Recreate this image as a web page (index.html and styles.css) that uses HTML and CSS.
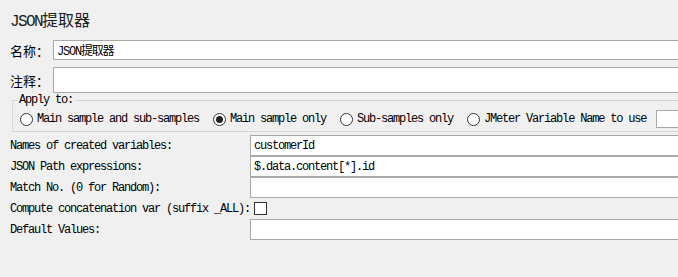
FILE: index.html
```html
<!DOCTYPE html>
<html lang="zh-CN">
<head>
    <meta charset="UTF-8">
    <meta name="viewport" content="width=device-width, initial-scale=1.0">
    <title>JSON提取器</title>
    <link rel="stylesheet" href="styles.css">
</head>
<body>
    <div class="panel">
        <h1 class="title"><span class="latin">JSON</span>提取器</h1>

        <div class="top-row name-row">
            <label class="top-label">名称：</label>
            <input class="field" type="text" value="JSON提取器">
        </div>
        <div class="top-row comment-row">
            <label class="top-label">注释：</label>
            <input class="field" type="text">
        </div>

        <fieldset class="apply-to">
            <legend>Apply to:</legend>
            <div class="radio-group">
                <div class="radio-item"><span class="radio"></span>Main sample and sub-samples</div>
                <div class="radio-item"><span class="radio checked"></span>Main sample only</div>
                <div class="radio-item"><span class="radio"></span>Sub-samples only</div>
                <div class="radio-item"><span class="radio"></span>JMeter Variable Name to use</div>
                <input class="field var-field" type="text">
            </div>
        </fieldset>

        <div class="settings">
            <label>Names of created variables:</label>
            <input class="field" type="text" value="customerId">
            <label>JSON Path expressions:</label>
            <input class="field" type="text" value="$.data.content[*].id">
            <label>Match No. (0 for Random):</label>
            <input class="field" type="text">
            <label>Compute concatenation var (suffix _ALL):</label>
            <div class="check-cell"><span class="checkbox"></span></div>
            <label>Default Values:</label>
            <input class="field" type="text">
        </div>
    </div>
</body>
</html>
```

FILE: styles.css
```css
body {
    margin: 0;
    background-color: #f0f0f0;
    overflow: hidden;
    font-family: "Liberation Mono", "Noto Sans CJK SC", monospace;
    font-size: 12px;
    color: #000;
}
.panel {
    padding: 10px 0 0 10px;
}
.title {
    margin: 0;
    font-family: "Noto Sans CJK SC", sans-serif;
    font-size: 16px;
    font-weight: normal;
    line-height: 18px;
    color: #1e1e1e;
}
.latin {
    font-family: "Liberation Mono", monospace;
    letter-spacing: -1.6px;
}
.top-row {
    display: flex;
    align-items: center;
}
.name-row {
    margin-top: 9px;
    height: 20px;
}
.comment-row {
    margin-top: 7px;
    height: 26px;
}
.top-label {
    width: 43px;
    font-family: "Noto Sans CJK SC", sans-serif;
    font-size: 13px;
}
.field {
    box-sizing: border-box;
    width: 0;
    height: 100%;
    flex: 1;
    min-width: 0;
    margin: 0;
    padding: 0 3px;
    border: 1px solid #a9a9a9;
    border-right: none;
    background-color: white;
    font-family: "Liberation Mono", "Noto Sans CJK SC", monospace;
    font-size: 12px;
    letter-spacing: -1.2px;
    color: #000;
    outline: none;
}
.apply-to {
    min-inline-size: 0;
    margin: 0 0 0 2px;
    padding: 3px 0 3px 7px;
    border: 1px solid #d6d6d6;
    border-right: none;
    letter-spacing: -1.2px;
}
.apply-to legend {
    margin-left: -3px;
    padding: 0 2px;
    line-height: 14px;
}
.radio-group {
    display: flex;
    align-items: center;
    height: 18px;
}
.radio-item {
    display: flex;
    align-items: center;
    margin-right: 14px;
    white-space: nowrap;
}
.radio {
    box-sizing: border-box;
    width: 13px;
    height: 13px;
    margin-right: 4px;
    border: 1px solid #333;
    border-radius: 50%;
    background-color: white;
    display: flex;
    align-items: center;
    justify-content: center;
}
.radio.checked::after {
    content: "";
    width: 7px;
    height: 7px;
    border-radius: 50%;
    background-color: #222;
}
.var-field {
    margin-left: -4px;
    height: 18px;
}
.settings {
    margin-top: 3px;
    display: grid;
    grid-template-columns: 240px minmax(0, 1fr);
    grid-auto-rows: 21px;
    align-items: center;
    letter-spacing: -1.2px;
}
.settings label {
    white-space: nowrap;
}
.settings .field {
    width: auto;
    height: 21px;
}
.check-cell {
    display: flex;
    align-items: center;
    padding-left: 4px;
}
.checkbox {
    box-sizing: border-box;
    width: 13px;
    height: 13px;
    border: 1px solid #333;
    background-color: white;
}
```
